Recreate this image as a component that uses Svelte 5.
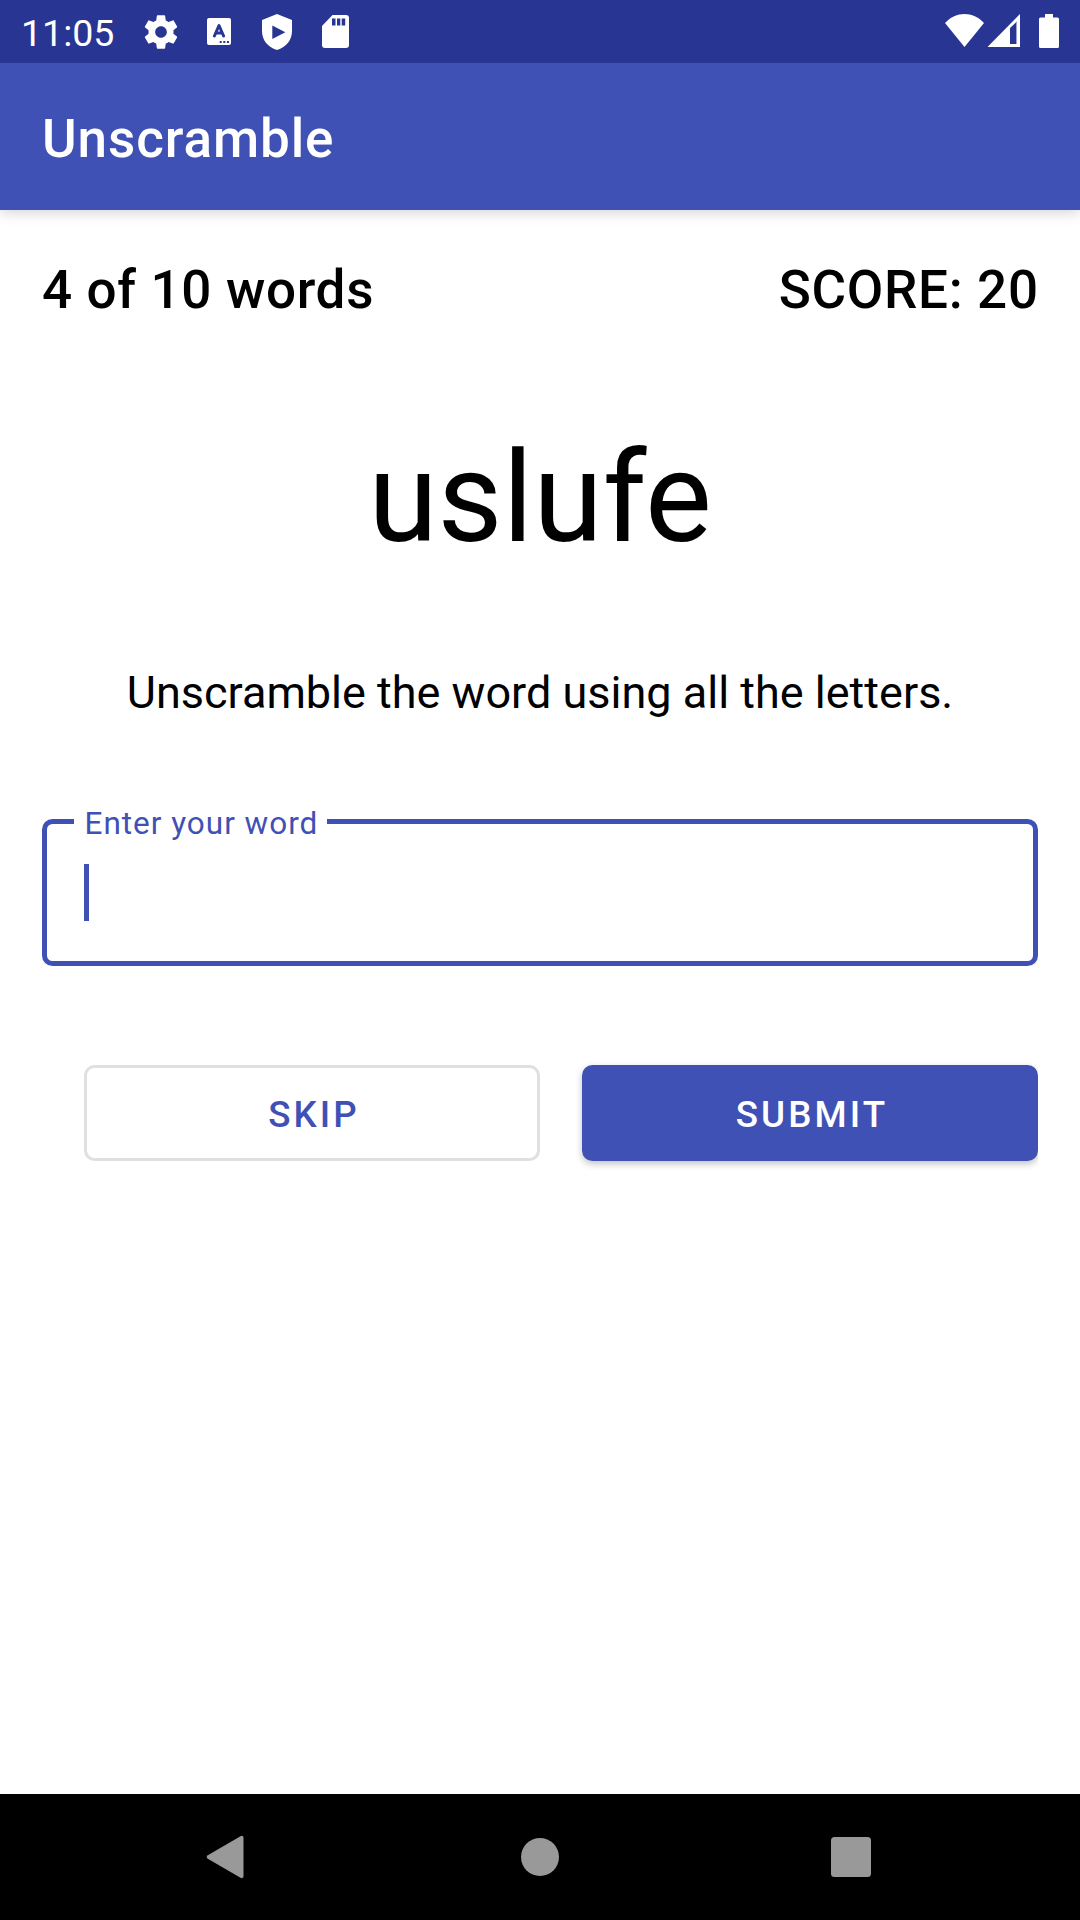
<script>
  let wordNumber = $state(4);
  let score = $state(20);
  let scrambled = $state('uslufe');
</script>

<div class="screen">
  <header class="status">
    <span class="time">11:05</span>
    <svg class="gear" width="40" height="40" viewBox="0 0 24 24"><path fill="#fff" d="M19.43 12.98c.04-.32.07-.64.07-.98s-.03-.66-.07-.98l2.11-1.65c.19-.15.24-.42.12-.64l-2-3.46c-.12-.22-.39-.3-.61-.22l-2.49 1c-.52-.4-1.08-.73-1.69-.98l-.38-2.65C14.46 2.18 14.25 2 14 2h-4c-.25 0-.46.18-.49.42l-.38 2.65c-.61.25-1.17.59-1.69.98l-2.49-1c-.23-.09-.49 0-.61.22l-2 3.46c-.13.22-.07.49.12.64l2.11 1.65c-.04.32-.07.65-.07.98s.03.66.07.98l-2.11 1.65c-.19.15-.24.42-.12.64l2 3.46c.12.22.39.3.61.22l2.49-1c.52.4 1.08.73 1.69.98l.38 2.65c.03.24.24.42.49.42h4c.25 0 .46-.18.49-.42l.38-2.65c.61-.25 1.17-.59 1.69-.98l2.49 1c.23.09.49 0 .61-.22l2-3.46c.12-.22.07-.49-.12-.64l-2.11-1.65zM12 15.5c-1.93 0-3.5-1.57-3.5-3.5s1.57-3.5 3.5-3.5 3.5 1.57 3.5 3.5-1.57 3.5-3.5 3.5z"/></svg>
    <svg class="keyboard" width="24" height="27" viewBox="0 0 24 27">
      <rect width="24" height="27" rx="2" fill="#fff"/>
      <path d="M7.4 18 12 7.500l4.600 10.500M9 15h6" fill="none" stroke="#283593" stroke-width="3" stroke-linecap="round" stroke-linejoin="round"/>
      <path d="M12.700 23h2v2h-2zM16.300 23h2v2h-2zM19.900 23h2v2h-2z" fill="#283593"/>
    </svg>
    <svg class="shield" width="30" height="36" viewBox="0 0 30 36"><path fill="#fff" fill-rule="evenodd" d="M15 0 30 6v11c0 9-5.500 16-15 19C5.500 33 0 26 0 17V6zM10.300 11.500v13.500L23.300 18.200z"/></svg>
    <svg class="sd" width="27" height="33" viewBox="0 0 27 33"><path fill="#fff" fill-rule="evenodd" d="M10.500 0H24a3 3 0 0 1 3 3v27a3 3 0 0 1-3 3H3a3 3 0 0 1-3-3V11zM10 3.500v7h3.500v-7zM15 3.500v7h3.300v-7zM19.700 3.500v7h3.500v-7z"/></svg>
    <span class="spacer"></span>
    <svg class="wifi" width="39" height="33" viewBox="0 0 39 33"><path fill="#fff" d="M0 9C11-3 28-3 39 9L19.500 33z"/></svg>
    <svg class="signal" width="33" height="33" viewBox="0 0 33 33"><path fill="#fff" fill-rule="evenodd" d="M33 0v33H.5zM23 14v16h7V7.500z"/><path fill="#fff" opacity=".55" d="M29 8.500 30 7.500V30h-1z"/></svg>
    <svg class="battery" width="20" height="34" viewBox="0 0 20 34"><path fill="#fff" d="M6 0h8v3.500h4.500A1.500 1.500 0 0 1 20 5v27.500a1.500 1.500 0 0 1-1.500 1.500h-17A1.500 1.500 0 0 1 0 32.500V5a1.500 1.500 0 0 1 1.500-1.500H6z"/></svg>
  </header>

  <div class="appbar">Unscramble</div>

  <main>
    <div class="progress">
      <span>{wordNumber} of 10 words</span>
      <span class="score">SCORE: {score}</span>
    </div>
    <div class="word">{scrambled}</div>
    <p class="hint">Unscramble the word using all the letters.</p>
    <fieldset>
      <legend>Enter your word</legend>
      <div class="cursor"></div>
    </fieldset>
    <div class="actions">
      <button class="skip">SKIP</button>
      <div class="clip"><button class="submit">SUBMIT</button></div>
    </div>
  </main>

  <nav>
    <svg width="44" height="44" viewBox="0 0 44 44"><path fill="#999" d="M1.800 20.200 34.500 1.200Q37.500 0 37.500 3v38Q37.500 44 34.500 42.800L1.800 23.800Q-.4 22 1.800 20.200z"/></svg>
    <svg width="44" height="44" viewBox="0 0 44 44"><circle cx="22" cy="22" r="19" fill="#999"/></svg>
    <svg width="44" height="44" viewBox="0 0 44 44"><rect x="2" y="2" width="40" height="40" rx="3.500" fill="#999"/></svg>
  </nav>
</div>

<style>
  :global(body) {
    margin: 0;
  }
  .screen {
    width: 1080px;
    height: 1920px;
    display: flex;
    flex-direction: column;
    background: #fff;
    color: #000;
    font-family: Roboto, sans-serif;
    overflow: hidden;
  }
  svg {
    display: block;
    flex: none;
  }
  .status {
    position: relative;
    z-index: 1;
    height: 63px;
    flex: none;
    box-sizing: border-box;
    display: flex;
    align-items: center;
    padding: 0 21px;
    background: #283593;
    color: #fff;
  }
  .time {
    width: 120px;
    padding-top: 3px;
    font-size: 37.5px;
    line-height: 44px;
  }
  .keyboard {
    margin-left: 26px;
  }
  .shield {
    margin-left: 31px;
  }
  .sd {
    margin-left: 30px;
  }
  .spacer {
    flex: 1;
  }
  .wifi,
  .signal {
    margin-bottom: 2px;
  }
  .signal {
    margin-left: 3px;
  }
  .battery {
    margin: 0 0 1px 19px;
  }
  .appbar {
    height: 147px;
    flex: none;
    box-sizing: border-box;
    padding: 5px 42px 0;
    background: #3f51b5;
    color: #fff;
    font-size: 53px;
    font-weight: 500;
    line-height: 142px;
    letter-spacing: 0.9px;
    box-shadow: 0 3px 12px rgba(0, 0, 0, 0.17);
  }
  main {
    flex: 1;
    padding: 49px 42px 0;
  }
  .progress {
    display: flex;
    justify-content: space-between;
    font-size: 53px;
    font-weight: 500;
    line-height: 62px;
    letter-spacing: 0.0125em;
  }
  .score {
    margin-right: -0.7px;
  }
  .word {
    margin-top: 103px;
    font-size: 126px;
    line-height: 148px;
    text-align: center;
  }
  .hint {
    margin: 95px 0 0;
    font-size: 45px;
    line-height: 52px;
    text-align: center;
  }
  fieldset {
    box-sizing: border-box;
    height: 165px;
    margin: 82px 0 0;
    padding: 0 37px 0 27px;
    border: 5px solid #3f51b5;
    border-radius: 10.5px;
  }
  legend {
    padding: 5px 8.5px 0 10.5px;
    color: #3f51b5;
    font-size: 31.5px;
    line-height: 36px;
    letter-spacing: 0.03125em;
  }
  .cursor {
    width: 5px;
    height: 57px;
    margin: 22px 0 0 10px;
    background: #3f51b5;
  }
  .actions {
    display: flex;
    gap: 42px;
    margin: 99px 0 0 42px;
  }
  .clip {
    flex: 1;
    margin: -20px 0 -20px -20px;
    padding: 20px 0 20px 20px;
    overflow: hidden;
  }
  .actions button {
    display: block;
    box-sizing: border-box;
    height: 96px;
    border: 0;
    border-radius: 10.5px;
    padding: 3px 0 0 4px;
    font: 500 36.75px/44px Roboto, sans-serif;
    letter-spacing: 3.1px;
  }
  .actions .skip {
    width: 456px;
    flex: none;
    border: 3px solid #e0e0e0;
    background: #fff;
    color: #3f51b5;
  }
  .actions .submit {
    width: 456px;
    background: #3f51b5;
    color: #fff;
    box-shadow: 0 3px 7px rgba(0, 0, 0, 0.24);
  }
  nav {
    height: 126px;
    flex: none;
    box-sizing: border-box;
    display: flex;
    align-items: center;
    justify-content: space-between;
    padding: 0 207px 0 206px;
    background: #000;
  }
</style>
